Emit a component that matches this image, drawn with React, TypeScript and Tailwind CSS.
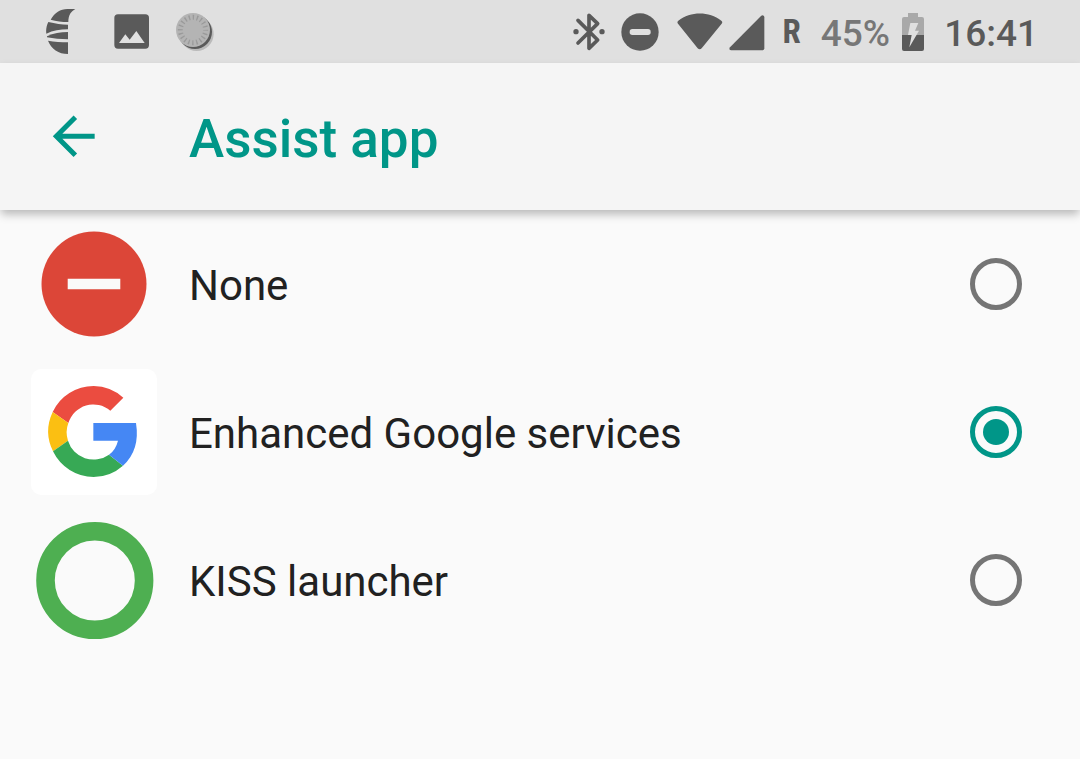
import { useState } from 'react'

function StatusBar() {
  return (
    <header className="flex h-[63px] items-center justify-between bg-[#e0e0e0] pr-[42px] pl-[46px] text-[#5a5a5a]">
      <div className="flex items-center">
        <svg className="h-[45px] w-[30px]" viewBox="48 27 90 135" fill="currentColor" aria-hidden="true">
          <path d="M62 59C74 38 91 27 112 27H136C124 34 115 44 115 66C96 66 79 64 62 59Z" />
          <path d="M55 66C76 71 95 74 114 74V88C90 88 69 91 49 101C47 89 50 76 55 66Z" />
          <path d="M51 109C70 99 91 96 114 96V118C92 118 70 116 51 112Z" />
          <path d="M54 122C73 125 94 127 114 127V162C86 162 63 146 54 122Z" />
        </svg>
        <svg className="ml-[38px] h-[35px] w-[35px]" viewBox="251 42 105 105" aria-hidden="true">
          <rect x="252" y="43" width="104" height="103" rx="11" fill="#5a5a5a" />
          <path d="M266 129L285 103L298 119L318 93L343 129Z" fill="#e0e0e0" />
        </svg>
        <svg className="ml-[27px] h-[38px] w-[38px]" viewBox="437 37 114 114" aria-hidden="true">
          <circle cx="499" cy="100" r="51" fill="#bababa" />
          <circle cx="494" cy="94" r="51" fill="#5a5a5a" />
          <circle cx="488" cy="88" r="51" fill="#b4b4b4" />
          <circle cx="488" cy="88" r="38" fill="none" stroke="#9a9a9a" strokeWidth="15" strokeDasharray="4 7.938" strokeDashoffset="2" />
        </svg>
      </div>
      <div className="flex items-center">
        <svg className="h-[38px] w-8" viewBox="37 38 96 114" aria-hidden="true">
          <path d="M52 60L111 119L85 144V45L111 70L52 128" fill="none" stroke="currentColor" strokeWidth="11" strokeLinecap="round" strokeLinejoin="round" />
          <circle cx="46" cy="94" r="8" fill="currentColor" />
          <circle cx="124" cy="94" r="8" fill="currentColor" />
        </svg>
        <svg className="ml-4 h-[38px] w-[38px]" viewBox="181 38 114 114" aria-hidden="true">
          <circle cx="238" cy="95" r="56" fill="currentColor" />
          <rect x="207" y="86" width="63" height="18" rx="8" fill="#e0e0e0" />
        </svg>
        <svg className="ml-[18px] h-[38px] w-[46px]" viewBox="349 38 138 114" fill="currentColor" aria-hidden="true">
          <path d="M353 61C390 32 445 32 482 61Q487 65 483 70L423 144Q417 150 411 144L352 70Q348 65 353 61Z" />
        </svg>
        <svg className="ml-1.5 h-[38px] w-9" viewBox="506 38 108 114" fill="currentColor" aria-hidden="true">
          <path d="M509 141L602 47Q606 43 610 46Q612 48 612 51V144Q612 150 606 150H512Q504 149 509 141Z" />
        </svg>
        <span className="ml-[18px] font-['Roboto_Condensed','Roboto',sans-serif] text-[33px] leading-[38px] font-bold">R</span>
        <span className="ml-5 pt-1 text-[37px] leading-[38px] font-medium text-[#777777]">45%</span>
        <svg className="ml-3 h-[38px] w-[22px]" viewBox="276 36 66 114" aria-hidden="true">
          <path d="M294 36H324V48H336Q342 48 342 54V103H276V54Q276 48 282 48H294Z" fill="#a9a9a9" />
          <path d="M276 102H342V144Q342 150 336 150H282Q276 150 276 144Z" fill="#5a5a5a" />
          <path d="M301 66H325L315 89H327L298 139L305 102H294Z" fill="#e0e0e0" />
        </svg>
        <time className="ml-5 pt-1 text-[37px] leading-[38px] font-medium">16:41</time>
      </div>
    </header>
  )
}

function NoneIcon() {
  return (
    <svg className="h-[126px] w-[126px]" viewBox="0 0 126 126" aria-hidden="true">
      <circle cx="63" cy="63" r="52.5" fill="#dc4638" />
      <path d="M36.7 57.7H89.3V68.3H36.7Z" fill="#fafafa" />
    </svg>
  )
}

function GoogleIcon() {
  return (
    <svg className="h-[126px] w-[126px] rounded-[10px] bg-white" viewBox="33 27 378 378" aria-hidden="true">
      <path d="M98 156A136 136 0 0 1 221 78A136 136 0 0 1 310 113L271 152A79 79 0 0 0 145 189Z" fill="#eb4c40" />
      <path d="M98 156A136 136 0 0 0 99 274L144 242A80 80 0 0 1 145 189Z" fill="#fbbf12" />
      <path d="M99 274A136 136 0 0 0 221 351A136 136 0 0 0 309 317L267 284A80 80 0 0 1 144 242Z" fill="#37a955" />
      <path d="M220 189H348Q361 270 309 317L267 284Q287 270 294 242H220Z" fill="#4587f4" />
    </svg>
  )
}

function KissIcon() {
  return (
    <svg className="h-[126px] w-[126px]" viewBox="0 0 126 126" aria-hidden="true">
      <circle cx="63.8" cy="63.5" r="49.3" fill="none" stroke="#4eaf51" strokeWidth="18.6" />
    </svg>
  )
}

const apps = [
  { id: 'none', label: 'None', Icon: NoneIcon },
  { id: 'google', label: 'Enhanced Google services', Icon: GoogleIcon },
  { id: 'kiss', label: 'KISS launcher', Icon: KissIcon },
]

export default function App() {
  const [selected, setSelected] = useState('google')

  return (
    <div className="min-h-screen bg-[#fafafa] font-['Roboto',sans-serif]">
      <StatusBar />
      <div className="relative flex h-[147px] items-center bg-[#f5f5f5] pl-[42px] text-[#009688] shadow-[0_5px_9px_-1px_rgba(0,0,0,0.28)]">
        <button type="button" aria-label="Navigate up" className="flex h-[63px] w-[63px] items-center justify-center">
          <svg className="h-[63px] w-[63px]" viewBox="126 46 189 189" fill="none" stroke="currentColor" strokeWidth="15" aria-hidden="true">
            <path d="M284 139.500H170M226 82.500L169 139.500L226 196.500" />
          </svg>
        </button>
        <h1 className="ml-[84px] pt-1 text-[53px] leading-[64px] font-medium">Assist app</h1>
      </div>
      <main role="radiogroup" aria-label="Assist app">
        {apps.map(({ id, label, Icon }) => (
          <label key={id} className="flex h-[148px] cursor-pointer items-center pr-[58px] pl-[31px]">
            <Icon />
            <span className="ml-8 flex-1 pt-1 text-[42px] leading-[50px] text-[#212121]">{label}</span>
            <input
              type="radio"
              name="assist-app"
              value={id}
              checked={selected === id}
              onChange={() => setSelected(id)}
              className="h-[52px] w-[52px] appearance-none rounded-full border-5 border-[#757575] bg-clip-content p-2 checked:border-[#009688] checked:bg-[#009688]"
            />
          </label>
        ))}
      </main>
    </div>
  )
}
